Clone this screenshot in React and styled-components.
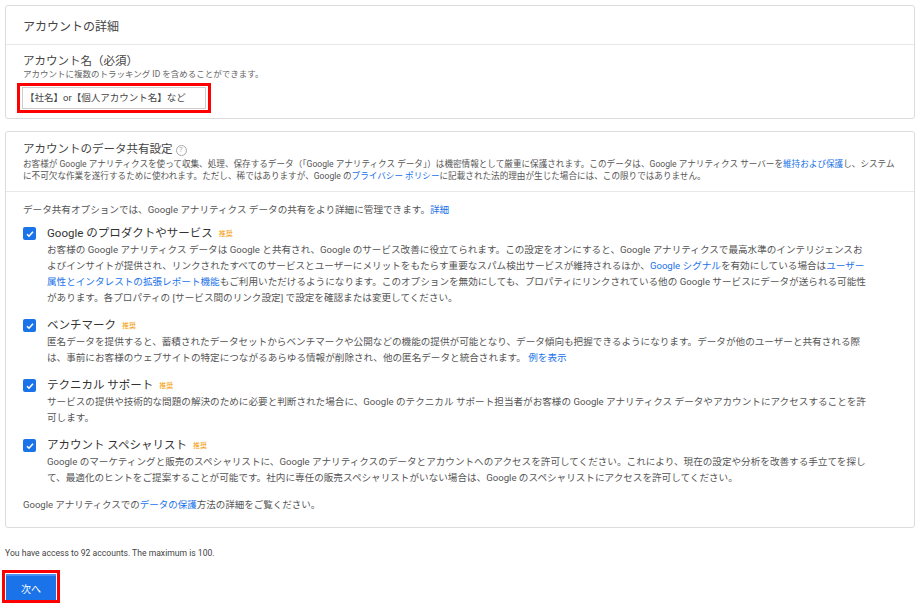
import React from 'react';
import styled, { createGlobalStyle } from 'styled-components';

const Global = createGlobalStyle`
  body {
    margin: 0;
    background: #fff;
    font-family: Roboto, "Noto Sans CJK JP", sans-serif;
    color: #333;
  }
`;

const Page = styled.div`
  padding: 5px 4px 0 5px;
`;

const Card = styled.div`
  border: 1px solid #dadce0;
  border-radius: 3px;
  margin-bottom: 12px;
  background: #fff;
`;

const CardHeader = styled.div`
  padding: 11px 17px 10px;
  font-size: 12px;
  color: #444;
  border-bottom: 1px solid #e8e8e8;
`;

const Section = styled.div`
  padding: ${(p) => p.pad || '10px 17px 10px'};
  border-bottom: ${(p) => (p.divider ? '1px solid #e8e8e8' : 'none')};
`;

const Label = styled.div`
  font-size: 11.5px;
  color: #444;
  line-height: 15px;
`;

const Help = styled.div`
  font-size: 8.5px;
  color: #666;
  line-height: 11px;
`;

const Desc = styled.div`
  font-size: 8.6px;
  color: #555;
  line-height: 12px;
  margin-top: 1px;
`;

const InputWrap = styled.div`
  display: inline-block;
  border: 3px solid #f00;
  padding: 1px 2px;
  margin: 3px 0 0 -6px;
`;

const Input = styled.div`
  width: 180px;
  height: 20px;
  border: 1px solid #ccc;
  font-size: 9.5px;
  color: #444;
  line-height: 20px;
  padding-left: 2px;
`;

const Qmark = styled.span`
  display: inline-block;
  width: 9px;
  height: 9px;
  border: 1px solid #aaa;
  border-radius: 50%;
  font-size: 7px;
  color: #aaa;
  text-align: center;
  line-height: 9px;
  margin-left: 3px;
  vertical-align: 1px;
`;

const Link = styled.span`
  color: #1a73e8;
`;

const Intro = styled.div`
  font-size: 9.6px;
  color: #555;
  margin: 4px 0 9px;
`;

const Item = styled.div`
  display: flex;
  gap: 11px;
  margin-bottom: 11px;
`;

const Check = styled.div`
  width: 13px;
  height: 13px;
  background: #1a73e8;
  border-radius: 2px;
  flex-shrink: 0;
  margin-top: 2px;
  display: flex;
  align-items: center;
  justify-content: center;
`;

const ItemTitle = styled.div`
  font-size: 11.5px;
  color: #333;
  line-height: 16px;
`;

const Badge = styled.span`
  font-size: 7px;
  color: #f29900;
  margin-left: 6px;
  vertical-align: 1px;
`;

const ItemBody = styled.div`
  font-size: 9.6px;
  color: #555;
  line-height: 16px;
  margin-right: 30px;
`;

const Footer = styled.div`
  font-size: 9.5px;
  color: #555;
  margin: 6px 0 8px;
`;

const Access = styled.div`
  font-size: 8.6px;
  color: #444;
  margin: 20px 0 12px;
`;

const ButtonWrap = styled.div`
  display: inline-block;
  border: 3px solid #f00;
  padding: 1px 1px 0;
  margin-left: -3px;
`;

const Button = styled.button`
  width: 50px;
  height: 26px;
  background: #1a73e8;
  border: none;
  color: #fff;
  font-size: 10px;
  font-family: inherit;
  border-top: 2px solid #4a90f0;
`;

const Tick = () => (
  <svg width="10" height="10" viewBox="0 0 10 10">
    <path d="M2 5.2l2 2 4-4.4" stroke="#fff" strokeWidth="1.6" fill="none" />
  </svg>
);

const items = [
  {
    title: 'Google のプロダクトやサービス',
    body: (
      <>
        お客様の Google アナリティクス データは Google と共有され、Google のサービス改善に役立てられます。この設定をオンにすると、Google アナリティクスで最高水準のインテリジェンスおよびインサイトが提供され、リンクされたすべてのサービスとユーザーにメリットをもたらす重要なスパム検出サービスが維持されるほか、<Link>Google シグナル</Link>を有効にしている場合は<Link>ユーザー属性とインタレストの拡張レポート機能</Link>もご利用いただけるようになります。このオプションを無効にしても、プロパティにリンクされている他の Google サービスにデータが送られる可能性があります。各プロパティの [サービス間のリンク設定] で設定を確認または変更してください。
      </>
    ),
  },
  {
    title: 'ベンチマーク',
    body: (
      <>
        匿名データを提供すると、蓄積されたデータセットからベンチマークや公開などの機能の提供が可能となり、データ傾向も把握できるようになります。データが他のユーザーと共有される際は、事前にお客様のウェブサイトの特定につながるあらゆる情報が削除され、他の匿名データと統合されます。 <Link>例を表示</Link>
      </>
    ),
  },
  {
    title: 'テクニカル サポート',
    body: 'サービスの提供や技術的な問題の解決のために必要と判断された場合に、Google のテクニカル サポート担当者がお客様の Google アナリティクス データやアカウントにアクセスすることを許可します。',
  },
  {
    title: 'アカウント スペシャリスト',
    body: 'Google のマーケティングと販売のスペシャリストに、Google アナリティクスのデータとアカウントへのアクセスを許可してください。これにより、現在の設定や分析を改善する手立てを探して、最適化のヒントをご提案することが可能です。社内に専任の販売スペシャリストがいない場合は、Google のスペシャリストにアクセスを許可してください。',
  },
];

export default function App() {
  return (
    <Page>
      <Global />
      <Card>
        <CardHeader>アカウントの詳細</CardHeader>
        <Section pad="9px 17px 5px">
          <Label>アカウント名（必須）</Label>
          <Help>アカウントに複数のトラッキング ID を含めることができます。</Help>
          <InputWrap>
            <Input>【社名】or【個人アカウント名】など</Input>
          </InputWrap>
        </Section>
      </Card>
      <Card>
        <Section divider pad="10px 17px 9px">
          <Label>
            アカウントのデータ共有設定<Qmark>?</Qmark>
          </Label>
          <Desc>
            お客様が Google アナリティクスを使って収集、処理、保存するデータ（「Google アナリティクス データ」）は機密情報として厳重に保護されます。このデータは、Google アナリティクス サーバーを<Link>維持および保護</Link>し、システムに不可欠な作業を遂行するために使われます。ただし、稀ではありますが、Google の<Link>プライバシー ポリシー</Link>に記載された法的理由が生じた場合には、この限りではありません。
          </Desc>
        </Section>
        <Section pad="6px 17px 8px">
          <Intro>
            データ共有オプションでは、Google アナリティクス データの共有をより詳細に管理できます。<Link>詳細</Link>
          </Intro>
          {items.map((it, i) => (
            <Item key={i}>
              <Check>
                <Tick />
              </Check>
              <div>
                <ItemTitle>
                  {it.title}
                  <Badge>推奨</Badge>
                </ItemTitle>
                <ItemBody>{it.body}</ItemBody>
              </div>
            </Item>
          ))}
          <Footer>
            Google アナリティクスでの<Link>データの保護</Link>方法の詳細をご覧ください。
          </Footer>
        </Section>
      </Card>
      <Access>You have access to 92 accounts. The maximum is 100.</Access>
      <ButtonWrap>
        <Button>次へ</Button>
      </ButtonWrap>
    </Page>
  );
}
